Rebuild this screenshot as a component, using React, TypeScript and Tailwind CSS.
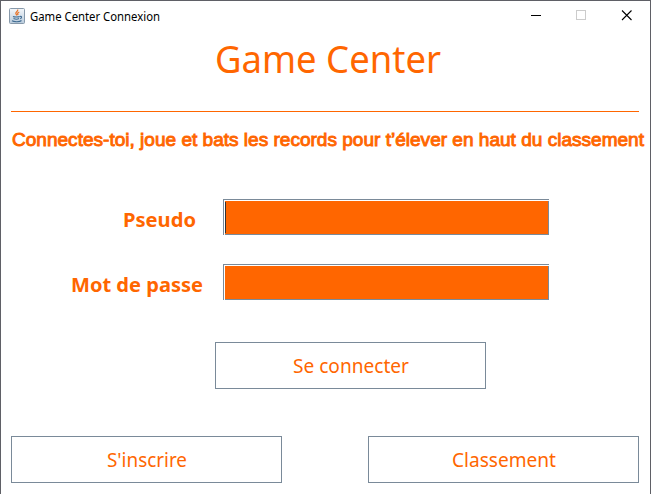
import React from 'react';

function FitText({ text, width, size, baseline, height, family, weight = 400, stroke = 0 }: { text: string; width: number; size: number; baseline: number; height: number; family: string; weight?: number; stroke?: number }) {
  return (
    <svg width={width} height={height} className="block shrink-0 overflow-visible" aria-label={text}>
      <text x="0" y={baseline} fontSize={size} fontFamily={family} fontWeight={weight} textLength={width} lengthAdjust="spacingAndGlyphs" fill="currentColor" stroke="currentColor" strokeWidth={stroke}>{text}</text>
    </svg>
  );
}

const SANS = "'Noto Sans', 'Open Sans', sans-serif";

function JavaIcon() {
  return (
    <svg width="16" height="16" viewBox="0 0 16 16" className="shrink-0">
      <defs>
        <linearGradient id="tile" x1="0" y1="0" x2="0" y2="1">
          <stop offset="0" stopColor="#f4f7fa" />
          <stop offset="1" stopColor="#b9cbdc" />
        </linearGradient>
      </defs>
      <rect x="0.5" y="0.5" width="15" height="15" rx="1" fill="url(#tile)" stroke="#8799aa" />
      <path d="M8.6 1.5c1 2-2.6 2.6-1.700 4.200l1 1.600M10.300 4c-2 .8-1.900 1.500-1.200 3" fill="none" stroke="#e8762c" strokeWidth="1.300" />
      <path d="M4 8.500c1 .6 5.500 .6 6.700 0M4.500 10.500c1.400.6 4.500 .6 5.500 0M11 8.500c2.200-.5 1.800 1.600.2 2.200M3 12.800c2 1.300 8 1.200 9.500-.3" fill="none" stroke="#416c92" strokeWidth="1.100" />
    </svg>
  );
}

function Field({ focused = false }: { focused?: boolean }) {
  return (
    <div className="h-9 w-[326px] border border-[#7a8a99] border-r-0 border-b-0 pt-px pl-px">
      <div className="flex h-[34px] w-[324px] items-center border-r border-b border-[#7a8a99] bg-[#ff6600]">
        {focused && <div className="h-[31px] w-px bg-[#333333]" />}
      </div>
    </div>
  );
}

function Button({ text, width }: { text: string; width: number }) {
  return (
    <button className="flex h-[47px] w-[271px] items-center justify-center border border-[#7a8a99] bg-white text-[#ff6600]">
      <FitText text={text} width={width} size={20} baseline={22} height={29} family={SANS} />
    </button>
  );
}

export default function App() {
  return (
    <div className="h-[502px] w-[651px] overflow-hidden bg-white text-[#ff6600]">
      <main className="flex h-[494px] w-[651px] flex-col border-x border-t border-[#5f6066]">
        <header className="flex h-[30px] shrink-0 items-center pl-2 text-black">
          <JavaIcon />
          <div className="ml-[5px] flex-1"><FitText text="Game Center Connexion" width={130} size={12} baseline={14} height={19} family={SANS} /></div>
          <svg width="130" height="30" shapeRendering="crispEdges">
            <path d="M11 14.500h10" stroke="black" />
            <rect x="56.500" y="9.500" width="9" height="9" fill="none" stroke="#cccccc" />
            <path d="M102 9.500l9.500 9.500m0-9.500l-9.500 9.500" stroke="black" strokeWidth="1.100" shapeRendering="auto" />
          </svg>
        </header>
        <div className="flex h-20 shrink-0 justify-center pl-[5px]">
          <FitText text="Game Center" width={226} size={39} baseline={42} height={60} family={SANS} />
        </div>
        <hr className="mr-[11px] ml-[10px] h-px shrink-0 border-0 bg-[#ff6600]" />
        <div className="h-[87px] shrink-0 pl-[11px]">
          <FitText text="Connectes-toi, joue et bats les records pour t’élever en haut du classement" width={632} size={18.5} baseline={34} height={45} family="'Liberation Sans', Arial, sans-serif" stroke={0.9} />
        </div>
        <div className="flex h-[65px] shrink-0">
          <div className="w-[222px] pl-[122px]"><FitText text="Pseudo" width={73} size={20} baseline={28} height={36} family={SANS} weight={700} /></div>
          <Field focused />
        </div>
        <div className="flex h-[78px] shrink-0">
          <div className="w-[222px] pl-[70px]"><FitText text="Mot de passe" width={132} size={20} baseline={28} height={36} family={SANS} weight={700} /></div>
          <Field />
        </div>
        <div className="h-[94px] shrink-0 pl-[214px]"><Button text="Se connecter" width={116} /></div>
        <div className="flex justify-between px-[10px] pr-[11px]">
          <Button text="S'inscrire" width={80} />
          <Button text="Classement" width={104} />
        </div>
      </main>
    </div>
  );
}
